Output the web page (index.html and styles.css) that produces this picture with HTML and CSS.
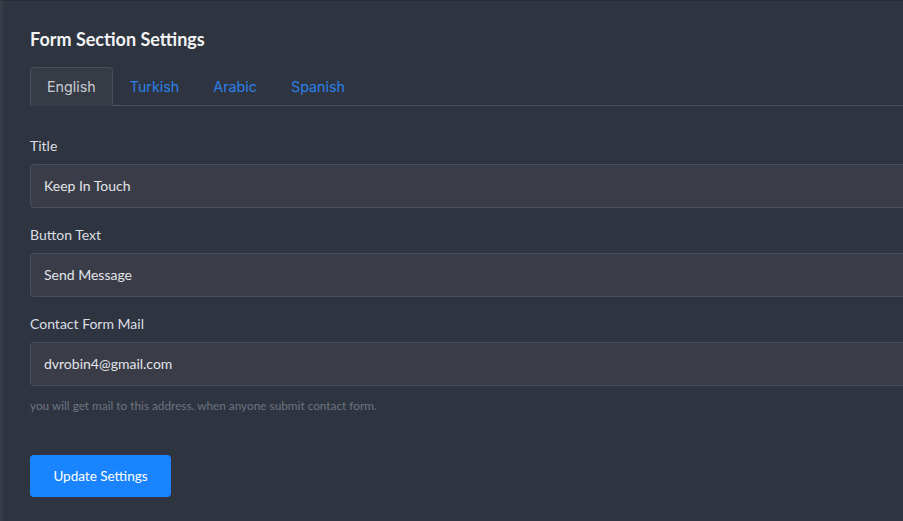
FILE: index.html
```html
<!DOCTYPE html>
<html>
<head>
<meta charset="utf-8">
<link rel="stylesheet" href="styles.css">
</head>
<body>
<div class="page">
  <div class="panel">
    <h2 class="heading">Form Section Settings</h2>
    <div class="tabs">
      <div class="tab active">English</div>
      <div class="tab">Turkish</div>
      <div class="tab">Arabic</div>
      <div class="tab">Spanish</div>
    </div>
    <form class="form">
      <div class="group">
        <label class="label">Title</label>
        <div class="input">Keep In Touch</div>
      </div>
      <div class="group">
        <label class="label">Button Text</label>
        <div class="input">Send Message</div>
      </div>
      <div class="group last">
        <label class="label">Contact Form Mail</label>
        <div class="input">dvrobin4@gmail.com</div>
        <small class="help">you will get mail to this address. when anyone submit contact form.</small>
      </div>
      <button type="button" class="btn">Update Settings</button>
    </form>
  </div>
</div>
</body>
</html>
```

FILE: styles.css
```css
html, body {
  margin: 0;
  padding: 0;
  height: 100%;
  overflow: hidden;
  background: #2f3540;
}

.page {
  height: 100%;
  overflow: hidden;
  border-top: 1px solid #272b33;
  border-left: 3px solid #383d48;
  box-sizing: border-box;
  font-family: Lato, "Liberation Sans", sans-serif;
  color: #e4e6ea;
}

.panel {
  width: 960px;
  padding: 27px 0 0 27px;
}

.heading {
  margin: 0;
  font-size: 18px;
  line-height: 22px;
  font-weight: 700;
  color: #f2f3f5;
}

.tabs {
  display: flex;
  margin-top: 17px;
  border-bottom: 1px solid #4a4f5b;
}

.tab {
  padding: 0 16px;
  height: 37px;
  line-height: 37px;
  border: 1px solid transparent;
  border-bottom: none;
  border-radius: 4px 4px 0 0;
  font-family: Inter, "Open Sans", sans-serif;
  font-size: 14.3px;
  color: #2a80e8;
  margin-bottom: -1px;
}

.tab.active {
  background: #363b46;
  border-color: #4a4f5b;
  border-bottom: 1px solid #363b46;
  color: #c9ccd2;
}

.form {
  padding-top: 30px;
}

.group {
  margin-bottom: 17px;
}

.label {
  display: block;
  font-size: 14px;
  line-height: 20px;
  color: #dcdfe4;
  margin-bottom: 8px;
}

.input {
  height: 44px;
  box-sizing: border-box;
  border: 1px solid #4b4f5b;
  border-radius: 4px;
  background: #3a3d48;
  padding: 0 13px;
  font-size: 14px;
  line-height: 42px;
  color: #e2e4e8;
}

.help {
  display: block;
  margin-top: 12px;
  font-size: 11.8px;
  line-height: 16px;
  color: #6e7380;
}

.group.last {
  margin-bottom: 41px;
}

.btn {
  display: block;
  width: 141px;
  height: 42px;
  border: none;
  border-radius: 4px;
  background: #1a84ff;
  color: #ffffff;
  font-family: Lato, "Liberation Sans", sans-serif;
  font-size: 13.5px;
  padding: 0;
}
```
